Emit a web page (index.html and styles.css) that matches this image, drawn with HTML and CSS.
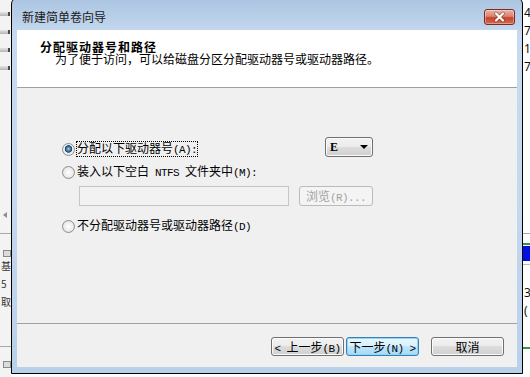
FILE: index.html
```html
<!DOCTYPE html>
<html lang="zh-CN">
<head>
    <meta charset="UTF-8">
    <meta name="viewport" content="width=device-width, initial-scale=1.0">
    <title>新建简单卷向导</title>
    <link rel="stylesheet" href="styles.css">
</head>
<body>
    <!-- 左侧：后面的窗口 -->
    <div class="desk desk-left">
        <span class="tray-icon"></span>
        <span class="tray-icon"></span>
        <span class="tray-icon"></span>
        <span class="tray-icon"></span>
        <span class="scroll-arrow"></span>
        <span class="rule rule-a"></span>
        <span class="disk-icon"></span>
        <span class="side-text">基</span>
        <span class="side-text">5</span>
        <span class="side-text">取</span>
        <span class="rule rule-b"></span>
        <span class="disk-icon disk-icon-low"></span>
    </div>

    <!-- 向导窗口 -->
    <div class="window">
        <div class="titlebar">
            <span class="title">新建简单卷向导</span>
            <div class="close">
                <svg width="29" height="14" viewBox="0 0 29 14">
                    <path d="M11 3.5 L18 10.5 M18 3.5 L11 10.5" stroke="#6a2015" stroke-width="3.6" stroke-linecap="round" opacity="0.55"/>
                    <path d="M11 3.5 L18 10.5 M18 3.5 L11 10.5" stroke="#ffffff" stroke-width="2.2" stroke-linecap="round"/>
                </svg>
            </div>
        </div>

        <div class="client">
            <!-- 标题区 -->
            <div class="wiz-header">
                <h1>分配驱动器号和路径</h1>
                <p>为了便于访问，可以给磁盘分区分配驱动器号或驱动器路径。</p>
            </div>

            <!-- 选项 -->
            <div class="wiz-body">
                <div class="options">
                    <div class="row-first">
                        <div class="choice focused">
                            <span class="radio checked"></span>
                            <span class="label-text">分配以下驱动器号<span class="en">(A):</span></span>
                        </div>
                        <div class="combo">
                            <span class="combo-value">E</span>
                            <span class="combo-arrow"></span>
                        </div>
                    </div>

                    <div class="choice choice-second">
                        <span class="radio"></span>
                        <span class="label-text">装入以下空白<span class="en"> NTFS </span>文件夹中<span class="en">(M):</span></span>
                    </div>

                    <div class="path-row">
                        <div class="path-input"></div>
                        <div class="browse">浏览<span class="en">(R)...</span></div>
                    </div>

                    <div class="choice choice-third">
                        <span class="radio"></span>
                        <span class="label-text">不分配驱动器号或驱动器路径<span class="en">(D)</span></span>
                    </div>
                </div>
            </div>

            <!-- 按钮 -->
            <div class="wiz-footer">
                <button class="btn"><span class="en">&lt; </span>上一步<span class="en">(B)</span></button>
                <button class="btn btn-default btn-next">下一步<span class="en">(N) &gt;</span></button>
                <button class="btn btn-cancel">取消</button>
            </div>
        </div>
    </div>

    <!-- 右侧：后面的表格 -->
    <div class="desk desk-right">
        <span class="num num-first">4</span>
        <span class="num">7</span>
        <span class="num">1</span>
        <span class="num">7</span>
        <span class="rule rule-c"></span>
        <span class="bar-green"></span>
        <span class="bar-blue"></span>
        <span class="rule rule-d"></span>
        <span class="num num-three">3</span>
        <span class="num">(</span>
        <span class="bar-green bar-green-low"></span>
    </div>
</body>
</html>
```

FILE: styles.css
```css
/* 通用 */
* {
    box-sizing: border-box;
}

body {
    margin: 0;
    width: 530px;
    height: 377px;
    overflow: hidden;
    display: flex;
    align-items: flex-start;
    background-color: #ffffff;
    font-family: "Noto Sans CJK SC", sans-serif;
    font-size: 12px;
    color: #000000;
}

/* 半角字母 */
.en {
    font-family: "Liberation Mono", monospace;
    font-size: 11px;
    letter-spacing: -0.6px;
}

/* 背景：左右两侧 */
.desk {
    height: 377px;
    flex-shrink: 0;
    display: flex;
    flex-direction: column;
    overflow: hidden;
}

.desk-left {
    width: 11px;
    background-color: #f3f3f3;
}

.tray-icon {
    width: 10px;
    height: 4px;
    margin-top: 14px;
    background: linear-gradient(#e4e4e4, #b4b4b4);
    border-right: 2px solid #4a4a4a;
}

.tray-icon:first-child {
    margin-top: 12px;
}

.scroll-arrow {
    width: 0;
    height: 0;
    margin: 142px 0 0 3px;
    border-top: 3px solid transparent;
    border-bottom: 3px solid transparent;
    border-right: 4px solid #8c8c8c;
}

.rule {
    height: 1px;
    background-color: #a8a8a8;
}

.rule-a {
    margin-top: 15px;
}

.rule-b {
    margin-top: 35px;
}

.disk-icon {
    width: 8px;
    height: 7px;
    margin: 16px 0 0 3px;
    border: 1px solid #8a8a8a;
    background-color: #dcdcdc;
}

.disk-icon-low {
    margin-top: 14px;
}

.side-text {
    margin-left: 1px;
    line-height: 18px;
    font-size: 10px;
    color: #333333;
}

.side-text:nth-of-type(1) {
    margin-top: 4px;
}

.desk-right {
    width: 7px;
    background-color: #ffffff;
}

.num {
    padding-left: 1px;
    line-height: 18px;
    font-family: "Noto Sans", sans-serif;
    font-size: 12px;
    color: #111111;
}

.num-first {
    margin-top: 4px;
}

.num-three {
    margin-top: 19px;
}

.rule-c {
    margin-top: 157px;
}

.rule-d {
    margin-top: 3px;
    background-color: #b8b8b8;
}

.bar-green {
    height: 2px;
    margin-top: 9px;
    background-color: #2e9a42;
}

.bar-green-low {
    margin-top: 27px;
}

.bar-blue {
    height: 15px;
    margin-top: 1px;
    background-color: #0010e0;
}

/* 窗口外框 */
.window {
    width: 512px;
    height: 377px;
    margin-top: -3px;
    flex-shrink: 0;
    border: 1px solid #000000;
    border-radius: 7px 7px 0 0;
    padding: 0 5px 6px;
    background: linear-gradient(180deg, #aac4e1 0%, #c7daef 10%, #c4d8ee 55%, #b8d0ea 100%);
    display: flex;
    flex-direction: column;
}

.titlebar {
    height: 32px;
    display: flex;
    justify-content: space-between;
    align-items: flex-start;
}

.title {
    margin-top: 13px;
    padding-left: 5px;
    line-height: 12px;
    color: #1a1a1a;
}

.close {
    width: 31px;
    height: 16px;
    margin: 11px 2px 0 0;
    border: 1px solid #7b2c20;
    border-radius: 3px;
    background: linear-gradient(180deg, #eab4a8 0%, #d9826f 45%, #c5442d 55%, #d36a51 100%);
    box-shadow: inset 0 0 0 1px rgba(255, 255, 255, 0.35);
}

.close svg {
    display: block;
}

/* 客户区 */
.client {
    height: 337px;
    display: flex;
    flex-direction: column;
    background-color: #f0f0f0;
}

.wiz-header {
    height: 58px;
    padding: 10px 0 0 23px;
    background-color: #ffffff;
    border-bottom: 1px solid #a0a0a0;
}

.wiz-header h1 {
    margin: 0;
    font-size: 12px;
    line-height: 13px;
    font-weight: bold;
    letter-spacing: 1px;
}

.wiz-header p {
    margin: 0 0 0 15px;
    line-height: 12px;
}

.wiz-body {
    height: 235px;
    padding: 49px 0 0 45px;
}

.options {
    width: 311px;
    display: flex;
    flex-direction: column;
}

.row-first {
    height: 20px;
    display: flex;
    justify-content: space-between;
    align-items: flex-start;
}

.choice {
    height: 14px;
    margin-top: 5px;
    display: flex;
    align-items: center;
}

.choice-second {
    margin-top: 8px;
}

.choice-third {
    margin-top: 13px;
}

.label-text {
    line-height: 12px;
    border: 1px dotted transparent;
}

.focused .label-text {
    border-color: #000000;
}

/* 单选框 */
.radio {
    width: 13px;
    height: 13px;
    margin-right: 1px;
    border-radius: 50%;
    border: 1px solid #8e8f8f;
    background: radial-gradient(circle at 50% 50%, #ffffff 0%, #ececec 55%, #cfcfcf 100%);
}

.radio.checked {
    background: radial-gradient(circle at 50% 45%, #9fd0f2 0%, #3f6f98 28%, #1f4468 42%, #f2f2f2 50%, #d4d4d4 100%);
}

/* 下拉框 */
.combo {
    width: 48px;
    height: 20px;
    padding: 0 4px;
    display: flex;
    align-items: center;
    border: 1px solid #707070;
    border-radius: 3px;
    background: linear-gradient(#f2f2f2 0%, #ebebeb 50%, #dddddd 50%, #cfcfcf 100%);
    box-shadow: inset 0 0 0 1px #fbfbfb;
}

.combo-value {
    font-family: "Liberation Serif", serif;
    font-size: 12px;
    font-weight: bold;
}

.combo-arrow {
    width: 0;
    height: 0;
    margin-left: auto;
    border-left: 4px solid transparent;
    border-right: 4px solid transparent;
    border-top: 4px solid #000000;
}

/* 路径 */
.path-row {
    margin-top: 7px;
    padding-left: 17px;
    display: flex;
    gap: 10px;
}

.path-input {
    width: 210px;
    height: 20px;
    border: 1px solid #c3c6c8;
    background-color: #f2f2f2;
}

.browse {
    width: 74px;
    height: 20px;
    line-height: 18px;
    text-align: center;
    color: #a3a3a3;
    border: 1px solid #b9bcbe;
    border-radius: 3px;
    background-color: #f4f4f4;
}

/* 底部按钮 */
.wiz-footer {
    height: 44px;
    padding: 13px 13px 0 0;
    display: flex;
    justify-content: flex-end;
    align-items: flex-start;
    border-top: 1px solid #a0a0a0;
}

.btn {
    width: 73px;
    height: 19px;
    padding: 0;
    font: inherit;
    line-height: 17px;
    color: #000000;
    border: 1px solid #707070;
    border-radius: 3px;
    background: linear-gradient(#f2f2f2 0%, #ebebeb 50%, #dddddd 50%, #cfcfcf 100%);
    box-shadow: inset 0 0 0 1px #fbfbfb;
}

.btn-default {
    border-color: #3c7fb1;
    background: linear-gradient(#eaf6fd 0%, #d9f0fc 50%, #bee6fd 50%, #a7d9f5 100%);
    box-shadow: inset 0 0 0 1px #8fd6f7;
}

.btn-next {
    margin-left: 2px;
}

.btn-cancel {
    margin-left: 12px;
}
```
